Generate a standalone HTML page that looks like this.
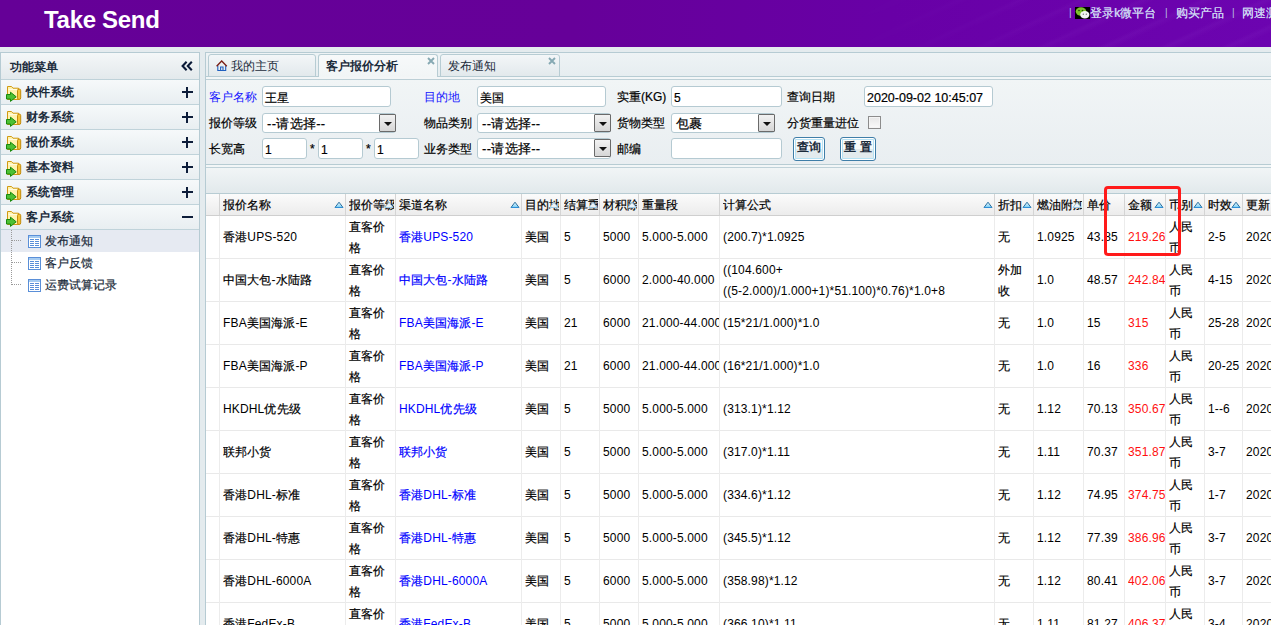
<!DOCTYPE html>
<html><head><meta charset="utf-8">
<style>
*{box-sizing:border-box;margin:0;padding:0}
html,body{width:1271px;height:625px;overflow:hidden;background:#e4ebee;font-family:"Liberation Sans",sans-serif;font-size:12px;color:#000}
div,span,svg{position:absolute;white-space:nowrap}
#hdr{left:0;top:0;width:1271px;height:47px;background:linear-gradient(90deg,#650097 0%,#660099 45%,#6800a6 70%,#6c04b0 100%);overflow:hidden}
#title{left:44px;top:6px;color:#fff;font-weight:bold;font-size:24px;line-height:28px;letter-spacing:-0.3px}
.tl{top:6px;color:#ccd2f2;font-size:12px;line-height:14px;text-shadow:0.4px 0 0 #ccd2f2}
.pn{background:#fff;border:1px solid #b6cbd3}
.mh{left:1px;top:53px;width:198px;height:27px;background:linear-gradient(#f4f7f8,#e3e9ec);border-bottom:1px solid #bfd2d9}
.mtxt{font-weight:bold;color:#1b2b3b;line-height:14px}
.mi{left:1px;width:198px;height:25px;background:linear-gradient(#f6f9fa,#e8eef1);border-bottom:1px solid #c0d3da}
.mi .t{left:25px;top:5px}
.plus{left:181px;top:7px;width:11px;height:11px}
.plus:before{content:"";position:absolute;left:0;top:4px;width:11px;height:2px;background:#0d1d3a}
.plus:after{content:"";position:absolute;left:4px;top:0;width:2px;height:11px;background:#0d1d3a}
.minus:after{display:none}
.fold{left:5px;top:4px;width:17px;height:19px}
.sub{left:1px;width:198px;height:22px}
.sub .t{left:44px;top:4px;color:#1b2b3b;line-height:14px;font-size:12px;-webkit-text-stroke:0.2px #1b2b3b}
.sub .ic{left:27px;top:5px;width:13px;height:13px}
.lbl{line-height:14px;-webkit-text-stroke:0.2px currentColor}
.blue{color:#1515ff;-webkit-text-stroke:0}
.inp{-webkit-text-stroke:0.2px #000;background:#fff;border:1px solid #b5cad2;border-radius:3px;padding-left:2px;line-height:23px;font-size:12px}
.dd{width:17px;height:18px;background:linear-gradient(#f2f2f2,#d6d6d6);border:1px solid #6a6a6a;border-radius:1px}
.dd:after{content:"";position:absolute;left:4px;top:7px;border-left:4px solid transparent;border-right:4px solid transparent;border-top:4px solid #111}
.btn{height:24px;border:1px solid #3f7ea8;border-radius:3px;background:linear-gradient(#fbfdfe 0,#f5f9fa 52%,#e3ebee 52%,#e3ebee 100%);box-shadow:inset 0 0 0 1px #fff,inset 0 0 0 2px #b6e2f4;font-weight:bold;color:#1b2b3b;text-align:center;line-height:18px}
.vl{width:1px;background:#d2d2d2}
.hl{height:1px;background:#e6e6e6}
.c{line-height:14px;letter-spacing:0.15px}
b.k{font-weight:normal;-webkit-text-stroke:0.2px currentColor}
.lk{color:#0000ff}
.rd{color:#ff1010}
.srt{width:10px;height:7px}
</style></head><body>
<div id="hdr">
  <div id="title">Take Send</div>
  <div style="left:850px;top:0;width:421px;height:47px;background:repeating-linear-gradient(155deg,rgba(255,255,255,0) 0px,rgba(255,255,255,0) 16px,rgba(210,170,255,0.045) 20px,rgba(255,255,255,0) 26px);-webkit-mask-image:linear-gradient(90deg,transparent,#000 60%)"></div>
  <span class="tl" style="left:1069px;text-shadow:none;color:#b8bde0;font-size:10px;top:6px">|</span>
  <span style="left:1075px;top:7px;width:15px;height:12px;background:#000;overflow:hidden">
    <svg width="15" height="12" viewBox="0 0 15 12" style="position:absolute;left:0;top:0"><ellipse cx="6" cy="4.5" rx="5.3" ry="4.2" fill="#7cc22a"/><ellipse cx="9.8" cy="7.8" rx="4.6" ry="3.8" fill="#f2f2f2"/><circle cx="4" cy="3.5" r=".8" fill="#1c4a00"/><circle cx="7.5" cy="3.5" r=".8" fill="#1c4a00"/><circle cx="8.3" cy="7.2" r=".6" fill="#555"/><circle cx="11.3" cy="7.2" r=".6" fill="#555"/></svg>
  </span>
  <span class="tl" style="left:1090px">登录k微平台</span>
  <span class="tl" style="left:1165px;text-shadow:none;color:#b8bde0;font-size:10px;top:6px">|</span>
  <span class="tl" style="left:1176px">购买产品</span>
  <span class="tl" style="left:1232px;text-shadow:none;color:#b8bde0;font-size:10px;top:6px">|</span>
  <span class="tl" style="left:1242px">网速测</span>
</div>

<!-- LEFT PANEL -->
<div class="pn" style="left:0;top:52px;width:200px;height:580px"></div>
<div class="mh"><span class="mtxt" style="left:9px;top:7px">功能菜单</span>
  <svg style="position:absolute;left:180px;top:8px" width="13" height="11" viewBox="0 0 13 11"><path d="M5.6 0.8L1.6 5L5.6 9.2M10.8 0.8L6.8 5L10.8 9.2" stroke="#0b1a38" stroke-width="2.1" fill="none"/></svg>
</div>
<div class="mi" style="top:80px"><svg class="fold"><use href="#fd"/></svg><span class="t mtxt">快件系统</span><span class="plus"></span></div>
<div class="mi" style="top:105px"><svg class="fold"><use href="#fd"/></svg><span class="t mtxt">财务系统</span><span class="plus"></span></div>
<div class="mi" style="top:130px"><svg class="fold"><use href="#fd"/></svg><span class="t mtxt">报价系统</span><span class="plus"></span></div>
<div class="mi" style="top:155px"><svg class="fold"><use href="#fd"/></svg><span class="t mtxt">基本资料</span><span class="plus"></span></div>
<div class="mi" style="top:180px"><svg class="fold"><use href="#fd"/></svg><span class="t mtxt">系统管理</span><span class="plus"></span></div>
<div class="mi" style="top:205px"><svg class="fold"><use href="#fd"/></svg><span class="t mtxt">客户系统</span><span class="plus minus"></span></div>
<div class="sub" style="top:230px;background:#e6eaf2"><svg class="ic"><use href="#li"/></svg><span class="t">发布通知</span></div>
<div class="sub" style="top:252px"><svg class="ic"><use href="#li"/></svg><span class="t">客户反馈</span></div>
<div class="sub" style="top:274px"><svg class="ic"><use href="#li"/></svg><span class="t">运费试算记录</span></div>
<svg style="position:absolute;left:0;top:229px" width="30" height="60"><path d="M11.5 1V56M12 11.5H22M12 33.5H22M12 55.5H22" stroke="#9a9a9a" stroke-width="1" stroke-dasharray="1 1" fill="none"/></svg>

<svg width="0" height="0" style="position:absolute">
  <defs>
    <linearGradient id="tg" x1="0" y1="0" x2="0" y2="1"><stop offset="0" stop-color="#eefaff"/><stop offset="1" stop-color="#74ccf4"/></linearGradient>
    <g id="fd">
      <path d="M1.5 2.5H5.5L7 4.2H12.5V15.5H1.5Z" fill="#fff3ae" stroke="#d19a12"/>
      <path d="M2.5 5.5H11.5" stroke="#fffbe0"/>
      <rect x="11.5" y="5" width="3.2" height="10.5" rx="1.6" fill="#f2c43a" stroke="#c48a08"/>
      <path d="M0.5 10.5H4.5V8.2L10.2 12.8L4.5 17.4V15H0.5Z" fill="#4ec034" stroke="#178a0c"/>
    </g>
    <g id="li">
      <rect x=".5" y=".5" width="12" height="12" fill="#fff" stroke="#5a8fd8"/>
      <rect x="1" y="1" width="11" height="2" fill="#a6ccf2"/>
      <path d="M2 4.5h4M7 4.5h4M2 6.5h4M7 6.5h4M2 8.5h4M7 8.5h4M2 10.5h4M7 10.5h4" stroke="#5a8fd8"/>
    </g>
  </defs>
</svg>

<!-- MAIN PANEL -->
<div class="pn" style="left:205px;top:52px;width:1070px;height:580px;background:#edf1f3"></div>
<!-- tab strip -->
<div style="left:206px;top:53px;width:1066px;height:24px;background:linear-gradient(#eef3f5,#e6edf0)"></div>
<div style="left:206px;top:76px;width:1066px;height:1px;background:#b7ccd3"></div>
<div style="left:206px;top:77px;width:1066px;height:2px;background:#f3f6f7"></div>
<div style="left:206px;top:79px;width:1066px;height:1px;background:#bccfd6"></div>
<!-- tabs -->
<div style="left:208px;top:54px;width:108px;height:23px;border:1px solid #b7ccd3;border-radius:3px 3px 0 0;background:linear-gradient(#f3f6f8,#e2e9ec)">
  <svg style="position:absolute;left:7px;top:4px" width="12" height="13" viewBox="0 0 12 13"><path d="M1.8 6.5V11.5H9.7V6.5M4.6 11.5V8H7V11.5" stroke="#1f5fbf" stroke-width="1.1" fill="none"/><path d="M0.6 7.3L5.7 2L10.8 7.3" stroke="#7a1e14" stroke-width="1.3" fill="none"/></svg>
  <span class="mtxt" style="left:22px;top:4px;font-weight:normal">我的主页</span>
</div>
<div style="left:318px;top:54px;width:120px;height:23px;border:1px solid #b7ccd3;border-bottom:none;border-radius:3px 3px 0 0;background:linear-gradient(#f7f9fa,#f1f5f6)">
  <span class="mtxt" style="left:7px;top:4px">客户报价分析</span>
  <svg style="position:absolute;left:108px;top:2px" width="8" height="8" viewBox="0 0 8 8"><path d="M1 1L7 7M7 1L1 7" stroke="#86a9b3" stroke-width="1.9"/></svg>
</div>
<div style="left:440px;top:54px;width:120px;height:23px;border:1px solid #b7ccd3;border-radius:3px 3px 0 0;background:linear-gradient(#f3f6f8,#e2e9ec)">
  <span class="mtxt" style="left:7px;top:4px;font-weight:normal">发布通知</span>
  <svg style="position:absolute;left:107px;top:2px" width="8" height="8" viewBox="0 0 8 8"><path d="M1 1L7 7M7 1L1 7" stroke="#86a9b3" stroke-width="1.9"/></svg>
</div>

<!-- FORM -->
<div style="left:206px;top:80px;width:1066px;height:84px;background:linear-gradient(#f1f5f6,#e9eef1)"></div>
<span class="lbl blue" style="left:209px;top:90px">客户名称</span>
<div class="inp" style="left:262px;top:86px;width:129px;height:21px">王星</div>
<span class="lbl blue" style="left:424px;top:90px">目的地</span>
<div class="inp" style="left:477px;top:86px;width:129px;height:21px">美国</div>
<span class="lbl" style="left:617px;top:90px">实重(KG)</span>
<div class="inp" style="left:671px;top:86px;width:111px;height:21px">5</div>
<span class="lbl" style="left:787px;top:90px">查询日期</span>
<div class="inp" style="left:864px;top:86px;width:129px;height:21px;font-size:12.5px">2020-09-02 10:45:07</div>

<span class="lbl" style="left:209px;top:116px">报价等级</span>
<div class="inp" style="left:262px;top:113px;width:134px;height:20px;padding-left:4px;font-size:13px;letter-spacing:0.3px;line-height:19px">--请选择--<span class="dd" style="left:116px;top:0px"></span></div>
<span class="lbl" style="left:424px;top:116px">物品类别</span>
<div class="inp" style="left:477px;top:113px;width:134px;height:20px;padding-left:4px;font-size:13px;letter-spacing:0.3px;line-height:19px">--请选择--<span class="dd" style="left:116px;top:0px"></span></div>
<span class="lbl" style="left:617px;top:116px">货物类型</span>
<div class="inp" style="left:671px;top:113px;width:104px;height:20px;padding-left:4px;font-size:13px;line-height:19px">包裹<span class="dd" style="left:86px;top:0px"></span></div>
<span class="lbl" style="left:787px;top:116px">分货重量进位</span>
<div style="left:868px;top:116px;width:13px;height:13px;border:1px solid #8c8c8c;background:linear-gradient(#e6e6e6,#fafafa);box-shadow:inset 0 0 0 1px #f4f4f4"></div>

<span class="lbl" style="left:209px;top:142px">长宽高</span>
<div class="inp" style="left:262px;top:138px;width:45px;height:21px">1</div>
<span class="lbl" style="left:310px;top:142px">*</span>
<div class="inp" style="left:318px;top:138px;width:45px;height:21px">1</div>
<span class="lbl" style="left:366px;top:142px">*</span>
<div class="inp" style="left:374px;top:138px;width:45px;height:21px">1</div>
<span class="lbl" style="left:424px;top:142px">业务类型</span>
<div class="inp" style="left:477px;top:138px;width:134px;height:21px;padding-left:4px;font-size:13px;letter-spacing:0.3px;line-height:19px">--请选择--<span class="dd" style="left:116px;top:0px"></span></div>
<span class="lbl" style="left:617px;top:142px">邮编</span>
<div class="inp" style="left:671px;top:138px;width:111px;height:21px"></div>
<div class="btn" style="left:793px;top:137px;width:32px">查询</div>
<div class="btn" style="left:840px;top:137px;width:36px">重 置</div>

<!-- form bottom + toolbar -->
<div style="left:206px;top:164px;width:1066px;height:1px;background:#b7ccd3"></div>
<div style="left:206px;top:165px;width:1066px;height:2px;background:#f2f6f7"></div>
<div style="left:206px;top:167px;width:1066px;height:1px;background:#bfd1d8"></div>
<div style="left:206px;top:168px;width:1066px;height:25px;background:linear-gradient(#f1f5f6,#e2e9ec)"></div>
<div style="left:206px;top:193px;width:1066px;height:1px;background:#b7ccd3"></div>

<div style="left:206px;top:216px;width:1065px;height:409px;background:#fff"></div>
<!-- GRID -->
<div style="left:206px;top:194px;width:1065px;height:21px;background:linear-gradient(#fbfbfb,#ececec)"></div>
<div style="left:206px;top:215px;width:1065px;height:1px;background:#cfcfcf"></div>
<div style="left:219px;top:194px;width:1px;height:21px;background:#d4d4d4"></div>
<div class="c" style="left:223px;top:198px;width:121px;height:15px;overflow:hidden"><b class="k">报价名称</b></div>
<svg class="srt" style="left:334px;top:201px" width="10" height="7" viewBox="0 0 10 7"><path d="M1 6.5L5 1.2L9 6.5Z" fill="url(#tg)" stroke="#2b6f9e" stroke-width="1"/><path d="M1.2 6.5H8.8" stroke="#2f8fd8"/></svg>
<div style="left:345px;top:194px;width:1px;height:21px;background:#d4d4d4"></div>
<div class="c" style="left:349px;top:198px;width:45px;height:15px;overflow:hidden"><b class="k">报价等级</b></div>
<svg class="srt" style="left:384px;top:201px" width="10" height="7" viewBox="0 0 10 7"><path d="M1 6.5L5 1.2L9 6.5Z" fill="#eef2f4" stroke="#9cc8e4" stroke-width="1"/></svg>
<div style="left:395px;top:194px;width:1px;height:21px;background:#d4d4d4"></div>
<div class="c" style="left:399px;top:198px;width:121px;height:15px;overflow:hidden"><b class="k">渠道名称</b></div>
<svg class="srt" style="left:510px;top:201px" width="10" height="7" viewBox="0 0 10 7"><path d="M1 6.5L5 1.2L9 6.5Z" fill="url(#tg)" stroke="#2b6f9e" stroke-width="1"/><path d="M1.2 6.5H8.8" stroke="#2f8fd8"/></svg>
<div style="left:521px;top:194px;width:1px;height:21px;background:#d4d4d4"></div>
<div class="c" style="left:525px;top:198px;width:34px;height:15px;overflow:hidden"><b class="k">目的地</b></div>
<svg class="srt" style="left:549px;top:201px" width="10" height="7" viewBox="0 0 10 7"><path d="M1 6.5L5 1.2L9 6.5Z" fill="#eef2f4" stroke="#9cc8e4" stroke-width="1"/></svg>
<div style="left:560px;top:194px;width:1px;height:21px;background:#d4d4d4"></div>
<div class="c" style="left:564px;top:198px;width:34px;height:15px;overflow:hidden"><b class="k">结算重</b></div>
<svg class="srt" style="left:588px;top:201px" width="10" height="7" viewBox="0 0 10 7"><path d="M1 6.5L5 1.2L9 6.5Z" fill="#eef2f4" stroke="#9cc8e4" stroke-width="1"/></svg>
<div style="left:599px;top:194px;width:1px;height:21px;background:#d4d4d4"></div>
<div class="c" style="left:603px;top:198px;width:34px;height:15px;overflow:hidden"><b class="k">材积除</b></div>
<svg class="srt" style="left:627px;top:201px" width="10" height="7" viewBox="0 0 10 7"><path d="M1 6.5L5 1.2L9 6.5Z" fill="#eef2f4" stroke="#9cc8e4" stroke-width="1"/></svg>
<div style="left:638px;top:194px;width:1px;height:21px;background:#d4d4d4"></div>
<div class="c" style="left:642px;top:198px;width:76px;height:15px;overflow:hidden"><b class="k">重量段</b></div>
<div style="left:719px;top:194px;width:1px;height:21px;background:#d4d4d4"></div>
<div class="c" style="left:723px;top:198px;width:270px;height:15px;overflow:hidden"><b class="k">计算公式</b></div>
<svg class="srt" style="left:983px;top:201px" width="10" height="7" viewBox="0 0 10 7"><path d="M1 6.5L5 1.2L9 6.5Z" fill="url(#tg)" stroke="#2b6f9e" stroke-width="1"/><path d="M1.2 6.5H8.8" stroke="#2f8fd8"/></svg>
<div style="left:994px;top:194px;width:1px;height:21px;background:#d4d4d4"></div>
<div class="c" style="left:998px;top:198px;width:34px;height:15px;overflow:hidden"><b class="k">折扣</b></div>
<svg class="srt" style="left:1022px;top:201px" width="10" height="7" viewBox="0 0 10 7"><path d="M1 6.5L5 1.2L9 6.5Z" fill="url(#tg)" stroke="#2b6f9e" stroke-width="1"/><path d="M1.2 6.5H8.8" stroke="#2f8fd8"/></svg>
<div style="left:1033px;top:194px;width:1px;height:21px;background:#d4d4d4"></div>
<div class="c" style="left:1037px;top:198px;width:45px;height:15px;overflow:hidden"><b class="k">燃油附加</b></div>
<svg class="srt" style="left:1072px;top:201px" width="10" height="7" viewBox="0 0 10 7"><path d="M1 6.5L5 1.2L9 6.5Z" fill="#eef2f4" stroke="#9cc8e4" stroke-width="1"/></svg>
<div style="left:1083px;top:194px;width:1px;height:21px;background:#d4d4d4"></div>
<div class="c" style="left:1087px;top:198px;width:36px;height:15px;overflow:hidden"><b class="k">单价</b></div>
<div style="left:1124px;top:194px;width:1px;height:21px;background:#d4d4d4"></div>
<div class="c" style="left:1128px;top:198px;width:36px;height:15px;overflow:hidden"><b class="k">金额</b></div>
<svg class="srt" style="left:1154px;top:201px" width="10" height="7" viewBox="0 0 10 7"><path d="M1 6.5L5 1.2L9 6.5Z" fill="url(#tg)" stroke="#2b6f9e" stroke-width="1"/><path d="M1.2 6.5H8.8" stroke="#2f8fd8"/></svg>
<div style="left:1165px;top:194px;width:1px;height:21px;background:#d4d4d4"></div>
<div class="c" style="left:1169px;top:198px;width:34px;height:15px;overflow:hidden"><b class="k">币别</b></div>
<svg class="srt" style="left:1193px;top:201px" width="10" height="7" viewBox="0 0 10 7"><path d="M1 6.5L5 1.2L9 6.5Z" fill="url(#tg)" stroke="#2b6f9e" stroke-width="1"/><path d="M1.2 6.5H8.8" stroke="#2f8fd8"/></svg>
<div style="left:1204px;top:194px;width:1px;height:21px;background:#d4d4d4"></div>
<div class="c" style="left:1208px;top:198px;width:33px;height:15px;overflow:hidden"><b class="k">时效</b></div>
<svg class="srt" style="left:1231px;top:201px" width="10" height="7" viewBox="0 0 10 7"><path d="M1 6.5L5 1.2L9 6.5Z" fill="url(#tg)" stroke="#2b6f9e" stroke-width="1"/><path d="M1.2 6.5H8.8" stroke="#2f8fd8"/></svg>
<div style="left:1242px;top:194px;width:1px;height:21px;background:#d4d4d4"></div>
<div class="c" style="left:1246px;top:198px;width:53px;height:15px;overflow:hidden"><b class="k">更新</b></div>
<div style="left:206px;top:258px;width:1065px;height:1px;background:#e9e9e9"></div>
<div class="c" style="left:223px;top:230px;width:122px;overflow:hidden;"><b class="k">香港</b>UPS-520</div>
<div class="c" style="left:349px;top:220px"><b class="k">直客价</b></div>
<div class="c" style="left:349px;top:241px"><b class="k">格</b></div>
<div class="c lk" style="left:399px;top:230px;width:122px;overflow:hidden;"><b class="k">香港</b>UPS-520</div>
<div class="c" style="left:525px;top:230px;width:35px;overflow:hidden;"><b class="k">美国</b></div>
<div class="c" style="left:564px;top:230px;width:35px;overflow:hidden;">5</div>
<div class="c" style="left:603px;top:230px;width:35px;overflow:hidden;">5000</div>
<div class="c" style="left:642px;top:230px;width:77px;overflow:hidden;">5.000-5.000</div>
<div class="c" style="left:723px;top:230px;width:271px;overflow:hidden;">(200.7)*1.0925</div>
<div class="c" style="left:998px;top:230px;width:35px;overflow:hidden;"><b class="k">无</b></div>
<div class="c" style="left:1037px;top:230px;width:46px;overflow:hidden;">1.0925</div>
<div class="c" style="left:1087px;top:230px;width:37px;overflow:hidden;">43.85</div>
<div class="c rd" style="left:1128px;top:230px;width:37px;overflow:hidden;">219.26</div>
<div class="c" style="left:1169px;top:220px"><b class="k">人民</b></div>
<div class="c" style="left:1169px;top:241px"><b class="k">币</b></div>
<div class="c" style="left:1208px;top:230px;width:34px;overflow:hidden;">2-5</div>
<div class="c" style="left:1246px;top:230px;width:54px;overflow:hidden;">2020</div>
<div style="left:206px;top:301px;width:1065px;height:1px;background:#e9e9e9"></div>
<div class="c" style="left:223px;top:273px;width:122px;overflow:hidden;"><b class="k">中国大包</b>-<b class="k">水陆路</b></div>
<div class="c" style="left:349px;top:263px"><b class="k">直客价</b></div>
<div class="c" style="left:349px;top:284px"><b class="k">格</b></div>
<div class="c lk" style="left:399px;top:273px;width:122px;overflow:hidden;"><b class="k">中国大包</b>-<b class="k">水陆路</b></div>
<div class="c" style="left:525px;top:273px;width:35px;overflow:hidden;"><b class="k">美国</b></div>
<div class="c" style="left:564px;top:273px;width:35px;overflow:hidden;">5</div>
<div class="c" style="left:603px;top:273px;width:35px;overflow:hidden;">6000</div>
<div class="c" style="left:642px;top:273px;width:77px;overflow:hidden;">2.000-40.000</div>
<div class="c" style="left:723px;top:263px">((104.600+</div>
<div class="c" style="left:723px;top:284px">((5-2.000)/1.000+1)*51.100)*0.76)*1.0+8</div>
<div class="c" style="left:998px;top:263px"><b class="k">外加</b></div>
<div class="c" style="left:998px;top:284px"><b class="k">收</b></div>
<div class="c" style="left:1037px;top:273px;width:46px;overflow:hidden;">1.0</div>
<div class="c" style="left:1087px;top:273px;width:37px;overflow:hidden;">48.57</div>
<div class="c rd" style="left:1128px;top:273px;width:37px;overflow:hidden;">242.84</div>
<div class="c" style="left:1169px;top:263px"><b class="k">人民</b></div>
<div class="c" style="left:1169px;top:284px"><b class="k">币</b></div>
<div class="c" style="left:1208px;top:273px;width:34px;overflow:hidden;">4-15</div>
<div class="c" style="left:1246px;top:273px;width:54px;overflow:hidden;">2020</div>
<div style="left:206px;top:344px;width:1065px;height:1px;background:#e9e9e9"></div>
<div class="c" style="left:223px;top:316px;width:122px;overflow:hidden;">FBA<b class="k">美国海派</b>-E</div>
<div class="c" style="left:349px;top:306px"><b class="k">直客价</b></div>
<div class="c" style="left:349px;top:327px"><b class="k">格</b></div>
<div class="c lk" style="left:399px;top:316px;width:122px;overflow:hidden;">FBA<b class="k">美国海派</b>-E</div>
<div class="c" style="left:525px;top:316px;width:35px;overflow:hidden;"><b class="k">美国</b></div>
<div class="c" style="left:564px;top:316px;width:35px;overflow:hidden;">21</div>
<div class="c" style="left:603px;top:316px;width:35px;overflow:hidden;">6000</div>
<div class="c" style="left:642px;top:316px;width:77px;overflow:hidden;">21.000-44.000</div>
<div class="c" style="left:723px;top:316px;width:271px;overflow:hidden;">(15*21/1.000)*1.0</div>
<div class="c" style="left:998px;top:316px;width:35px;overflow:hidden;"><b class="k">无</b></div>
<div class="c" style="left:1037px;top:316px;width:46px;overflow:hidden;">1.0</div>
<div class="c" style="left:1087px;top:316px;width:37px;overflow:hidden;">15</div>
<div class="c rd" style="left:1128px;top:316px;width:37px;overflow:hidden;">315</div>
<div class="c" style="left:1169px;top:306px"><b class="k">人民</b></div>
<div class="c" style="left:1169px;top:327px"><b class="k">币</b></div>
<div class="c" style="left:1208px;top:316px;width:34px;overflow:hidden;">25-28</div>
<div class="c" style="left:1246px;top:316px;width:54px;overflow:hidden;">2020</div>
<div style="left:206px;top:387px;width:1065px;height:1px;background:#e9e9e9"></div>
<div class="c" style="left:223px;top:359px;width:122px;overflow:hidden;">FBA<b class="k">美国海派</b>-P</div>
<div class="c" style="left:349px;top:349px"><b class="k">直客价</b></div>
<div class="c" style="left:349px;top:370px"><b class="k">格</b></div>
<div class="c lk" style="left:399px;top:359px;width:122px;overflow:hidden;">FBA<b class="k">美国海派</b>-P</div>
<div class="c" style="left:525px;top:359px;width:35px;overflow:hidden;"><b class="k">美国</b></div>
<div class="c" style="left:564px;top:359px;width:35px;overflow:hidden;">21</div>
<div class="c" style="left:603px;top:359px;width:35px;overflow:hidden;">6000</div>
<div class="c" style="left:642px;top:359px;width:77px;overflow:hidden;">21.000-44.000</div>
<div class="c" style="left:723px;top:359px;width:271px;overflow:hidden;">(16*21/1.000)*1.0</div>
<div class="c" style="left:998px;top:359px;width:35px;overflow:hidden;"><b class="k">无</b></div>
<div class="c" style="left:1037px;top:359px;width:46px;overflow:hidden;">1.0</div>
<div class="c" style="left:1087px;top:359px;width:37px;overflow:hidden;">16</div>
<div class="c rd" style="left:1128px;top:359px;width:37px;overflow:hidden;">336</div>
<div class="c" style="left:1169px;top:349px"><b class="k">人民</b></div>
<div class="c" style="left:1169px;top:370px"><b class="k">币</b></div>
<div class="c" style="left:1208px;top:359px;width:34px;overflow:hidden;">20-25</div>
<div class="c" style="left:1246px;top:359px;width:54px;overflow:hidden;">2020</div>
<div style="left:206px;top:430px;width:1065px;height:1px;background:#e9e9e9"></div>
<div class="c" style="left:223px;top:402px;width:122px;overflow:hidden;">HKDHL<b class="k">优先级</b></div>
<div class="c" style="left:349px;top:392px"><b class="k">直客价</b></div>
<div class="c" style="left:349px;top:413px"><b class="k">格</b></div>
<div class="c lk" style="left:399px;top:402px;width:122px;overflow:hidden;">HKDHL<b class="k">优先级</b></div>
<div class="c" style="left:525px;top:402px;width:35px;overflow:hidden;"><b class="k">美国</b></div>
<div class="c" style="left:564px;top:402px;width:35px;overflow:hidden;">5</div>
<div class="c" style="left:603px;top:402px;width:35px;overflow:hidden;">5000</div>
<div class="c" style="left:642px;top:402px;width:77px;overflow:hidden;">5.000-5.000</div>
<div class="c" style="left:723px;top:402px;width:271px;overflow:hidden;">(313.1)*1.12</div>
<div class="c" style="left:998px;top:402px;width:35px;overflow:hidden;"><b class="k">无</b></div>
<div class="c" style="left:1037px;top:402px;width:46px;overflow:hidden;">1.12</div>
<div class="c" style="left:1087px;top:402px;width:37px;overflow:hidden;">70.13</div>
<div class="c rd" style="left:1128px;top:402px;width:37px;overflow:hidden;">350.67</div>
<div class="c" style="left:1169px;top:392px"><b class="k">人民</b></div>
<div class="c" style="left:1169px;top:413px"><b class="k">币</b></div>
<div class="c" style="left:1208px;top:402px;width:34px;overflow:hidden;">1--6</div>
<div class="c" style="left:1246px;top:402px;width:54px;overflow:hidden;">2020</div>
<div style="left:206px;top:473px;width:1065px;height:1px;background:#e9e9e9"></div>
<div class="c" style="left:223px;top:445px;width:122px;overflow:hidden;"><b class="k">联邦小货</b></div>
<div class="c" style="left:349px;top:435px"><b class="k">直客价</b></div>
<div class="c" style="left:349px;top:456px"><b class="k">格</b></div>
<div class="c lk" style="left:399px;top:445px;width:122px;overflow:hidden;"><b class="k">联邦小货</b></div>
<div class="c" style="left:525px;top:445px;width:35px;overflow:hidden;"><b class="k">美国</b></div>
<div class="c" style="left:564px;top:445px;width:35px;overflow:hidden;">5</div>
<div class="c" style="left:603px;top:445px;width:35px;overflow:hidden;">5000</div>
<div class="c" style="left:642px;top:445px;width:77px;overflow:hidden;">5.000-5.000</div>
<div class="c" style="left:723px;top:445px;width:271px;overflow:hidden;">(317.0)*1.11</div>
<div class="c" style="left:998px;top:445px;width:35px;overflow:hidden;"><b class="k">无</b></div>
<div class="c" style="left:1037px;top:445px;width:46px;overflow:hidden;">1.11</div>
<div class="c" style="left:1087px;top:445px;width:37px;overflow:hidden;">70.37</div>
<div class="c rd" style="left:1128px;top:445px;width:37px;overflow:hidden;">351.87</div>
<div class="c" style="left:1169px;top:435px"><b class="k">人民</b></div>
<div class="c" style="left:1169px;top:456px"><b class="k">币</b></div>
<div class="c" style="left:1208px;top:445px;width:34px;overflow:hidden;">3-7</div>
<div class="c" style="left:1246px;top:445px;width:54px;overflow:hidden;">2020</div>
<div style="left:206px;top:516px;width:1065px;height:1px;background:#e9e9e9"></div>
<div class="c" style="left:223px;top:488px;width:122px;overflow:hidden;"><b class="k">香港</b>DHL-<b class="k">标准</b></div>
<div class="c" style="left:349px;top:478px"><b class="k">直客价</b></div>
<div class="c" style="left:349px;top:499px"><b class="k">格</b></div>
<div class="c lk" style="left:399px;top:488px;width:122px;overflow:hidden;"><b class="k">香港</b>DHL-<b class="k">标准</b></div>
<div class="c" style="left:525px;top:488px;width:35px;overflow:hidden;"><b class="k">美国</b></div>
<div class="c" style="left:564px;top:488px;width:35px;overflow:hidden;">5</div>
<div class="c" style="left:603px;top:488px;width:35px;overflow:hidden;">5000</div>
<div class="c" style="left:642px;top:488px;width:77px;overflow:hidden;">5.000-5.000</div>
<div class="c" style="left:723px;top:488px;width:271px;overflow:hidden;">(334.6)*1.12</div>
<div class="c" style="left:998px;top:488px;width:35px;overflow:hidden;"><b class="k">无</b></div>
<div class="c" style="left:1037px;top:488px;width:46px;overflow:hidden;">1.12</div>
<div class="c" style="left:1087px;top:488px;width:37px;overflow:hidden;">74.95</div>
<div class="c rd" style="left:1128px;top:488px;width:37px;overflow:hidden;">374.75</div>
<div class="c" style="left:1169px;top:478px"><b class="k">人民</b></div>
<div class="c" style="left:1169px;top:499px"><b class="k">币</b></div>
<div class="c" style="left:1208px;top:488px;width:34px;overflow:hidden;">1-7</div>
<div class="c" style="left:1246px;top:488px;width:54px;overflow:hidden;">2020</div>
<div style="left:206px;top:559px;width:1065px;height:1px;background:#e9e9e9"></div>
<div class="c" style="left:223px;top:531px;width:122px;overflow:hidden;"><b class="k">香港</b>DHL-<b class="k">特惠</b></div>
<div class="c" style="left:349px;top:521px"><b class="k">直客价</b></div>
<div class="c" style="left:349px;top:542px"><b class="k">格</b></div>
<div class="c lk" style="left:399px;top:531px;width:122px;overflow:hidden;"><b class="k">香港</b>DHL-<b class="k">特惠</b></div>
<div class="c" style="left:525px;top:531px;width:35px;overflow:hidden;"><b class="k">美国</b></div>
<div class="c" style="left:564px;top:531px;width:35px;overflow:hidden;">5</div>
<div class="c" style="left:603px;top:531px;width:35px;overflow:hidden;">5000</div>
<div class="c" style="left:642px;top:531px;width:77px;overflow:hidden;">5.000-5.000</div>
<div class="c" style="left:723px;top:531px;width:271px;overflow:hidden;">(345.5)*1.12</div>
<div class="c" style="left:998px;top:531px;width:35px;overflow:hidden;"><b class="k">无</b></div>
<div class="c" style="left:1037px;top:531px;width:46px;overflow:hidden;">1.12</div>
<div class="c" style="left:1087px;top:531px;width:37px;overflow:hidden;">77.39</div>
<div class="c rd" style="left:1128px;top:531px;width:37px;overflow:hidden;">386.96</div>
<div class="c" style="left:1169px;top:521px"><b class="k">人民</b></div>
<div class="c" style="left:1169px;top:542px"><b class="k">币</b></div>
<div class="c" style="left:1208px;top:531px;width:34px;overflow:hidden;">3-7</div>
<div class="c" style="left:1246px;top:531px;width:54px;overflow:hidden;">2020</div>
<div style="left:206px;top:602px;width:1065px;height:1px;background:#e9e9e9"></div>
<div class="c" style="left:223px;top:574px;width:122px;overflow:hidden;"><b class="k">香港</b>DHL-6000A</div>
<div class="c" style="left:349px;top:564px"><b class="k">直客价</b></div>
<div class="c" style="left:349px;top:585px"><b class="k">格</b></div>
<div class="c lk" style="left:399px;top:574px;width:122px;overflow:hidden;"><b class="k">香港</b>DHL-6000A</div>
<div class="c" style="left:525px;top:574px;width:35px;overflow:hidden;"><b class="k">美国</b></div>
<div class="c" style="left:564px;top:574px;width:35px;overflow:hidden;">5</div>
<div class="c" style="left:603px;top:574px;width:35px;overflow:hidden;">6000</div>
<div class="c" style="left:642px;top:574px;width:77px;overflow:hidden;">5.000-5.000</div>
<div class="c" style="left:723px;top:574px;width:271px;overflow:hidden;">(358.98)*1.12</div>
<div class="c" style="left:998px;top:574px;width:35px;overflow:hidden;"><b class="k">无</b></div>
<div class="c" style="left:1037px;top:574px;width:46px;overflow:hidden;">1.12</div>
<div class="c" style="left:1087px;top:574px;width:37px;overflow:hidden;">80.41</div>
<div class="c rd" style="left:1128px;top:574px;width:37px;overflow:hidden;">402.06</div>
<div class="c" style="left:1169px;top:564px"><b class="k">人民</b></div>
<div class="c" style="left:1169px;top:585px"><b class="k">币</b></div>
<div class="c" style="left:1208px;top:574px;width:34px;overflow:hidden;">3-7</div>
<div class="c" style="left:1246px;top:574px;width:54px;overflow:hidden;">2020</div>
<div style="left:206px;top:645px;width:1065px;height:1px;background:#e9e9e9"></div>
<div class="c" style="left:223px;top:617px;width:122px;overflow:hidden;"><b class="k">香港</b>FedEx-B</div>
<div class="c" style="left:349px;top:607px"><b class="k">直客价</b></div>
<div class="c" style="left:349px;top:628px"><b class="k">格</b></div>
<div class="c lk" style="left:399px;top:617px;width:122px;overflow:hidden;"><b class="k">香港</b>FedEx-B</div>
<div class="c" style="left:525px;top:617px;width:35px;overflow:hidden;"><b class="k">美国</b></div>
<div class="c" style="left:564px;top:617px;width:35px;overflow:hidden;">5</div>
<div class="c" style="left:603px;top:617px;width:35px;overflow:hidden;">5000</div>
<div class="c" style="left:642px;top:617px;width:77px;overflow:hidden;">5.000-5.000</div>
<div class="c" style="left:723px;top:617px;width:271px;overflow:hidden;">(366.10)*1.11</div>
<div class="c" style="left:998px;top:617px;width:35px;overflow:hidden;"><b class="k">无</b></div>
<div class="c" style="left:1037px;top:617px;width:46px;overflow:hidden;">1.11</div>
<div class="c" style="left:1087px;top:617px;width:37px;overflow:hidden;">81.27</div>
<div class="c rd" style="left:1128px;top:617px;width:37px;overflow:hidden;">406.37</div>
<div class="c" style="left:1169px;top:607px"><b class="k">人民</b></div>
<div class="c" style="left:1169px;top:628px"><b class="k">币</b></div>
<div class="c" style="left:1208px;top:617px;width:34px;overflow:hidden;">3-4</div>
<div class="c" style="left:1246px;top:617px;width:54px;overflow:hidden;">2020</div>
<div style="left:219px;top:216px;width:1px;height:420px;background:#ececec"></div>
<div style="left:345px;top:216px;width:1px;height:420px;background:#ececec"></div>
<div style="left:395px;top:216px;width:1px;height:420px;background:#ececec"></div>
<div style="left:521px;top:216px;width:1px;height:420px;background:#ececec"></div>
<div style="left:560px;top:216px;width:1px;height:420px;background:#ececec"></div>
<div style="left:599px;top:216px;width:1px;height:420px;background:#ececec"></div>
<div style="left:638px;top:216px;width:1px;height:420px;background:#ececec"></div>
<div style="left:719px;top:216px;width:1px;height:420px;background:#ececec"></div>
<div style="left:994px;top:216px;width:1px;height:420px;background:#ececec"></div>
<div style="left:1033px;top:216px;width:1px;height:420px;background:#ececec"></div>
<div style="left:1083px;top:216px;width:1px;height:420px;background:#ececec"></div>
<div style="left:1124px;top:216px;width:1px;height:420px;background:#ececec"></div>
<div style="left:1165px;top:216px;width:1px;height:420px;background:#ececec"></div>
<div style="left:1204px;top:216px;width:1px;height:420px;background:#ececec"></div>
<div style="left:1242px;top:216px;width:1px;height:420px;background:#ececec"></div>
<div style="left:1104px;top:186px;width:77px;height:70px;border:3px solid #ff1a1a;border-radius:4px"></div>
<!-- /GRID -->
</body></html>
